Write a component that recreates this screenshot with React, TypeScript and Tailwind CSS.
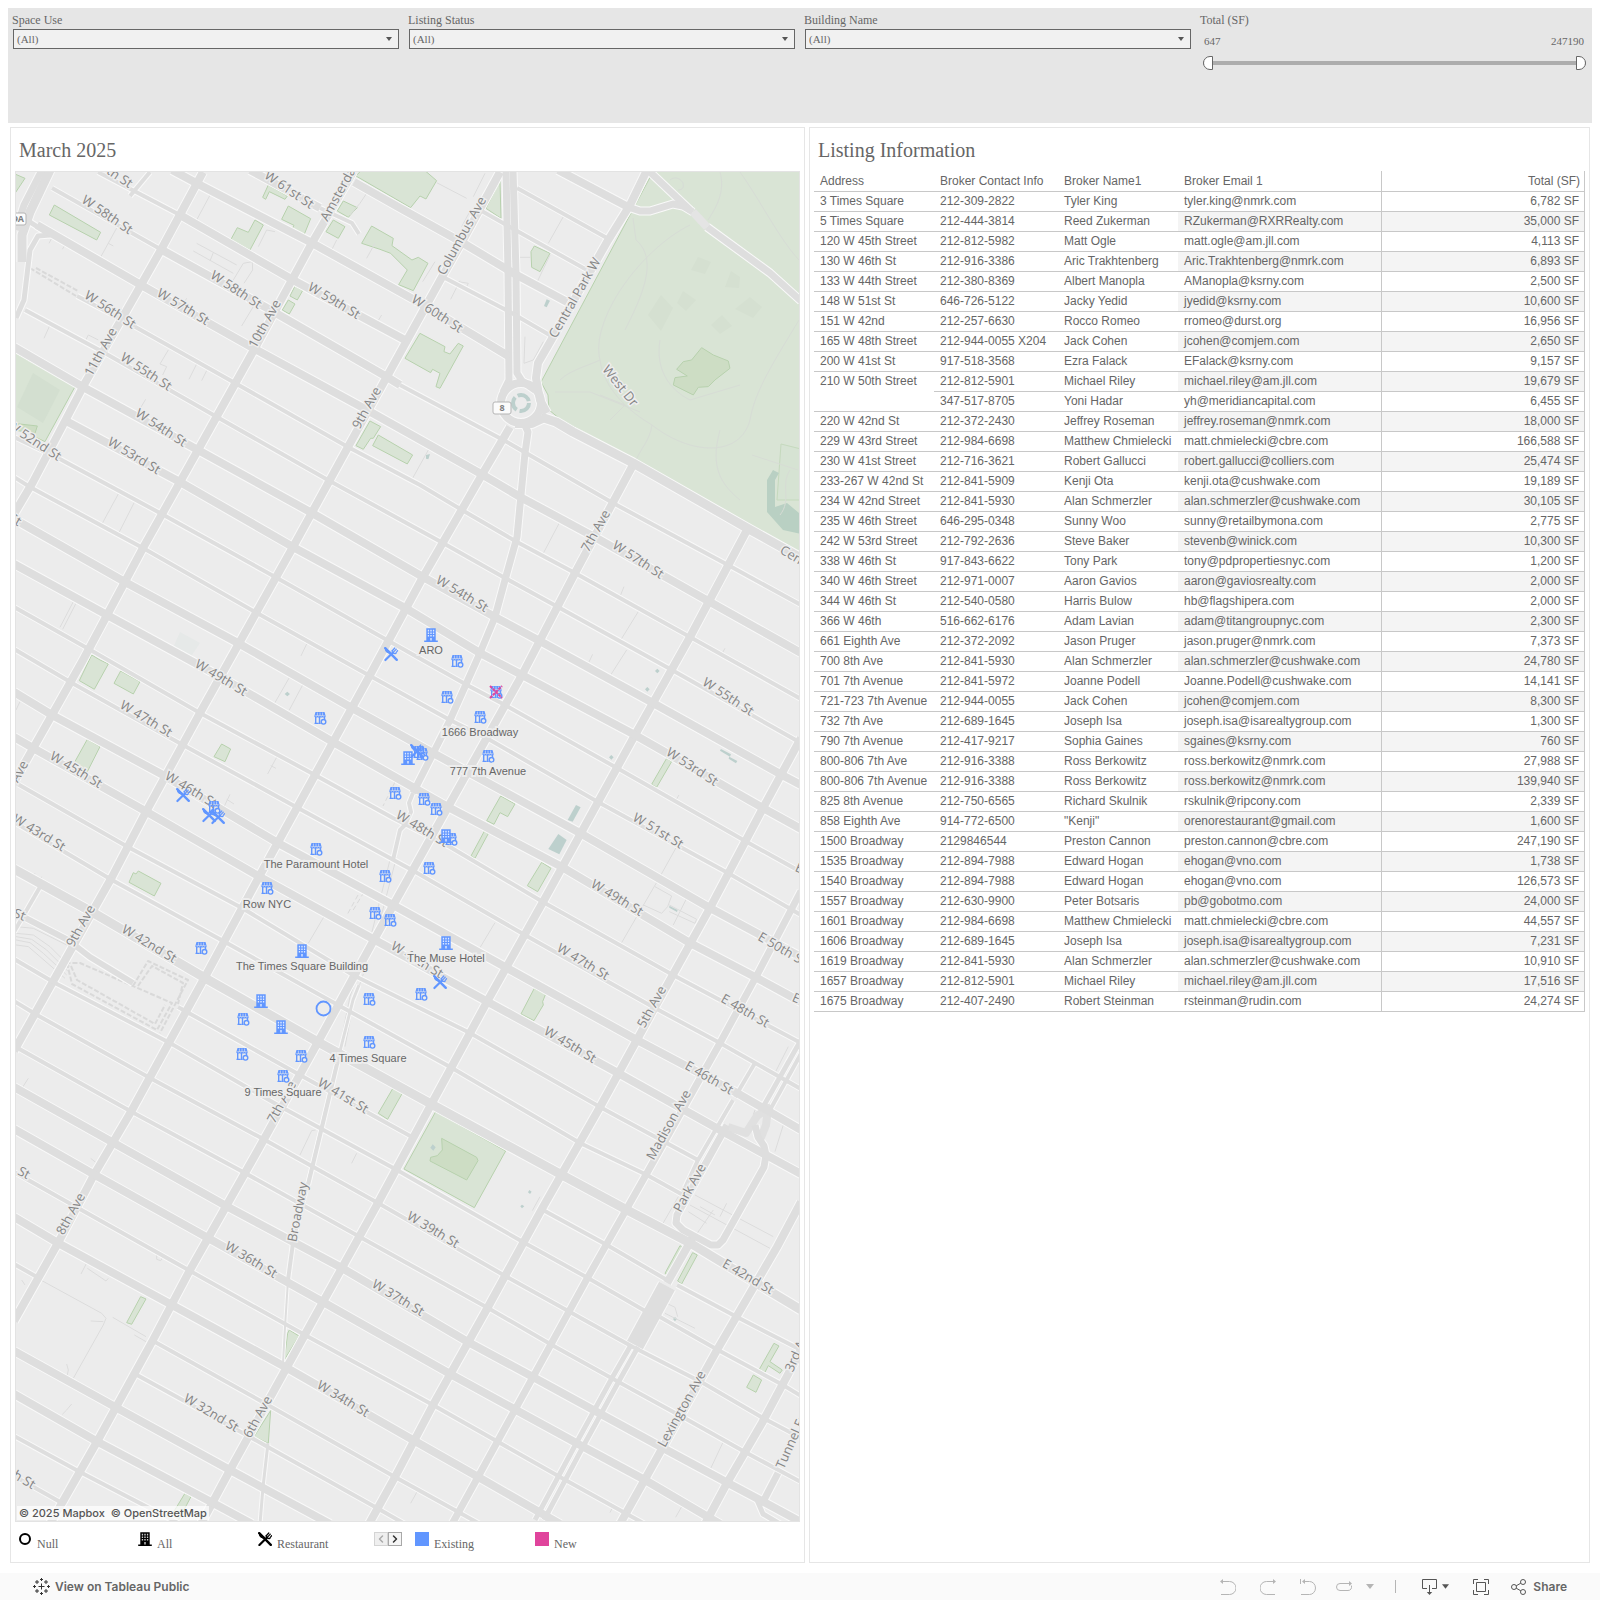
import { ChevronLeft, ChevronRight } from "lucide-react";

type Broker = [address: string, phone: string, name: string, email: string, total: string];

const LISTINGS: Broker[] = [
	["3 Times Square", "212-309-2822", "Tyler King", "tyler.king@nmrk.com", "6,782"],
	["5 Times Square", "212-444-3814", "Reed Zukerman", "RZukerman@RXRRealty.com", "35,000"],
	["120 W 45th Street", "212-812-5982", "Matt Ogle", "matt.ogle@am.jll.com", "4,113"],
	["130 W 46th St", "212-916-3386", "Aric Trakhtenberg", "Aric.Trakhtenberg@nmrk.com", "6,893"],
	["133 W 44th Street", "212-380-8369", "Albert Manopla", "AManopla@ksrny.com", "2,500"],
	["148 W 51st St", "646-726-5122", "Jacky Yedid", "jyedid@ksrny.com", "10,600"],
	["151 W 42nd", "212-257-6630", "Rocco Romeo", "rromeo@durst.org", "16,956"],
	["165 W 48th Street", "212-944-0055 X204", "Jack Cohen", "jcohen@comjem.com", "2,650"],
	["200 W 41st St", "917-518-3568", "Ezra Falack", "EFalack@ksrny.com", "9,157"],
	["210 W 50th Street", "212-812-5901", "Michael Riley", "michael.riley@am.jll.com", "19,679"],
	["210 W 50th Street", "347-517-8705", "Yoni Hadar", "yh@meridiancapital.com", "6,455"],
	["220 W 42nd St", "212-372-2430", "Jeffrey Roseman", "jeffrey.roseman@nmrk.com", "18,000"],
	["229 W 43rd Street", "212-984-6698", "Matthew Chmielecki", "matt.chmielecki@cbre.com", "166,588"],
	["230 W 41st Street", "212-716-3621", "Robert Gallucci", "robert.gallucci@colliers.com", "25,474"],
	["233-267 W 42nd St", "212-841-5909", "Kenji Ota", "kenji.ota@cushwake.com", "19,189"],
	["234 W 42nd Street", "212-841-5930", "Alan Schmerzler", "alan.schmerzler@cushwake.com", "30,105"],
	["235 W 46th Street", "646-295-0348", "Sunny Woo", "sunny@retailbymona.com", "2,775"],
	["242 W 53rd Street", "212-792-2636", "Steve Baker", "stevenb@winick.com", "10,300"],
	["338 W 46th St", "917-843-6622", "Tony Park", "tony@pdpropertiesnyc.com", "1,200"],
	["340 W 46th Street", "212-971-0007", "Aaron Gavios", "aaron@gaviosrealty.com", "2,000"],
	["344 W 46th St", "212-540-0580", "Harris Bulow", "hb@flagshipera.com", "2,000"],
	["366 W 46th", "516-662-6176", "Adam Lavian", "adam@titangroupnyc.com", "2,300"],
	["661 Eighth Ave", "212-372-2092", "Jason Pruger", "jason.pruger@nmrk.com", "7,373"],
	["700 8th Ave", "212-841-5930", "Alan Schmerzler", "alan.schmerzler@cushwake.com", "24,780"],
	["701 7th Avenue", "212-841-5972", "Joanne Podell", "Joanne.Podell@cushwake.com", "14,141"],
	["721-723 7th Avenue", "212-944-0055", "Jack Cohen", "jcohen@comjem.com", "8,300"],
	["732 7th Ave", "212-689-1645", "Joseph Isa", "joseph.isa@isarealtygroup.com", "1,300"],
	["790 7th Avenue", "212-417-9217", "Sophia Gaines", "sgaines@ksrny.com", "760"],
	["800-806 7th Ave", "212-916-3388", "Ross Berkowitz", "ross.berkowitz@nmrk.com", "27,988"],
	["800-806 7th Avenue", "212-916-3388", "Ross Berkowitz", "ross.berkowitz@nmrk.com", "139,940"],
	["825 8th Avenue", "212-750-6565", "Richard Skulnik", "rskulnik@ripcony.com", "2,339"],
	["858 Eighth Ave", "914-772-6500", "\"Kenji\"", "orenorestaurant@gmail.com", "1,600"],
	["1500 Broadway", "2129846544", "Preston Cannon", "preston.cannon@cbre.com", "247,190"],
	["1535 Broadway", "212-894-7988", "Edward Hogan", "ehogan@vno.com", "1,738"],
	["1540 Broadway", "212-894-7988", "Edward Hogan", "ehogan@vno.com", "126,573"],
	["1557 Broadway", "212-630-9900", "Peter Botsaris", "pb@gobotmo.com", "24,000"],
	["1601 Broadway", "212-984-6698", "Matthew Chmielecki", "matt.chmielecki@cbre.com", "44,557"],
	["1606 Broadway", "212-689-1645", "Joseph Isa", "joseph.isa@isarealtygroup.com", "7,231"],
	["1619 Broadway", "212-841-5930", "Alan Schmerzler", "alan.schmerzler@cushwake.com", "10,910"],
	["1657 Broadway", "212-812-5901", "Michael Riley", "michael.riley@am.jll.com", "17,516"],
	["1675 Broadway", "212-407-2490", "Robert Steinman", "rsteinman@rudin.com", "24,274"]
];

const FILTERS = ["Space Use", "Listing Status", "Building Name"];

// [width, points]
const ROADS: [number, string][] = [
	// avenues
	[8, "203,172 162,248 141,285 85,383 33,482 14,514"],
	[8, "353,172 312,243 255,348 198,450 143,548 83,660 52,715 14,782"],
	[8, "500,172 463,240 442,277 400,353 348,447 293,547 200,713 147,810 112,877 55,978 14,1051"],
	[8, "510,427 483,473 423,577 370,675 315,775 260,875 205,977 132,1110 95,1173 58,1243 14,1321"],
	[8, "633,465 575,573 522,675 448,807 375,938 318,1042 258,1150 190,1270 153,1340 98,1440 50,1524"],
	[8, "747,530 690,637 635,735 543,902 488,1000 432,1103 378,1203 323,1302 287,1367 230,1470 201,1524"],
	[8, "801,738 763,808 710,908 655,1007 600,1107 543,1207 488,1307 433,1405 395,1477 369,1524"],
	[7, "801,891 757,975 720,1043 647,1173 588,1277 533,1377 478,1477 452,1524"],
	[8, "801,1202 777,1247 717,1350 663,1447 620,1524"],
	[8, "801,1350 762,1423 727,1483 705,1524"],
	[7, "778,1473 764,1500"],
	[8, "693,1237 667,1283"],
	[18, "667,1286 635,1345"],
	[5, "631,1345 612,1378 578,1440 535,1520"],
	[5, "638,1347 619,1381 585,1443 544,1520"],
	[5, "801,1040 763,1107"],
	[4, "803,1050 770,1110"],
	[7, "727,1125 677,1215 676,1223 683,1230 711,1245 718,1245 723,1240 764,1167 766,1155 764,1146 758,1137 755,1125"],
	[4, "733,1100 698,1160 683,1192"],
	[4, "755,1063 735,1097"],
	// Broadway
	[7, "524,423 528,432 525,453 517,537 505,580 495,617 480,653 450,720 413,793"],
	[4, "413,793 409,803 411,812 405,825 400,830 393,860"],
	[3, "359,985 353,1000 337,1063 312,1167 293,1243"],
	[4, "338,1060 322,1127 308,1185"],
	[4, "293,1243 288,1280"],
	[2, "288,1280 285,1327 283,1363"],
	[3, "268,1443 263,1487 260,1524"],
	// Columbus circle and the park edge
	[7, "506,170 508,273 509,380 503,392"],
	[7, "513,170 516,273 517,373 522,381 535,390"],
	[8, "647,170 630,205 607,242 553,337 538,363 536,378 540,400 547,413"],
	[9, "541,417 556,422 573,432 633,463 747,528 801,558"],
	[8, "547,417 532,424 515,424"],
	[7, "650,172 690,210"],
	[7, "628,207 640,211 650,211 673,204 683,206 693,212"],
	[7, "707,227 770,273 801,301"],
	// west side highway
	[9, "50,170 30,212 22,235 22,262"],
	[7, "42,170 24,205 16,230"],
	[5, "30,222 50,235 38,236 30,250 24,300 16,318"],
	// cross streets, north to south
	[8, "558,170 630,208"],
	[4, "517,188 607,238"],
	[4, "480,210 510,227 587,270"],
	[8, "354,182 400,208 463,243 513,273 567,302"],
	[4, "443,277 510,312 553,337"],
	[8, "250,170 320,208"],
	[4, "320,208 352,223 359,234"],
	[8, "172,170 200,185 312,243 420,303 510,357"],
	[4, "98,172 180,215"],
	[8, "180,215 293,280 405,340"],
	[4, "52,188 162,250"],
	[8, "162,250 267,308 387,377 400,385"],
	[4, "130,196 140,184 150,172"],
	[4, "400,385 507,442 613,503 728,565 801,605"],
	[8, "37,225 141,285 253,348 367,410 483,475 522,498 600,540 710,602 801,653"],
	[4, "77,296 123,320 235,383 348,447 420,485 462,510 517,542 575,573 690,637 801,699"],
	[4, "25,310 103,352 217,417 328,480 443,543 505,578 558,607 672,670 801,743"],
	[8, "14,347 83,387 198,450 312,513 423,577 495,617 538,640 653,703 782,775 801,785"],
	[8, "68,422 180,482 293,547 407,609 480,653 522,675 635,735 763,808 801,829"],
	[4, "14,437 58,458 160,513 277,578 387,640 467,685 505,705 617,768 747,842 801,872"],
	[4, "14,477 30,487 143,548 257,613 372,677 450,720 490,740 598,802 728,873 801,915"],
	[8, "14,519 125,582 238,643 352,708 433,753 580,833 710,908 801,957"],
	[8, "14,564 107,615 217,675 333,742 448,807 562,867 690,943 757,978 801,1002"],
	[4, "14,607 87,648 200,713 315,775 393,818 450,847 543,902 673,975 801,1043"],
	[4, "14,649 72,683 183,745 298,808 412,870 525,935 653,1007 720,1043 801,1089"],
	[8, "14,692 52,715 163,775 278,843 393,905 507,968 637,1040 737,1093 801,1130"],
	[8, "14,737 33,748 147,812 260,877 375,940 488,1002 618,1073 720,1130 801,1174"],
	[4, "14,782 128,847 242,908 353,975 470,1033 600,1107 698,1160"],
	[4, "14,822 112,880 225,942 338,1005 452,1068 580,1143 647,1175 683,1195"],
	[9, "14,869 92,912 205,978 318,1042 433,1105 562,1175 627,1210 690,1243 801,1310"],
	[6, "14,912 68,940 90,957 133,983"],
	[4, "178,1007 300,1075 412,1137"],
	[4, "40,887 14,932"],
	[4, "543,1210 607,1245 667,1280"],
	[4, "677,1285 737,1317 801,1350"],
	[4, "14,959 55,983 170,1043 283,1108 397,1170 523,1242 588,1278 647,1312"],
	[4, "660,1317 718,1350 783,1385 801,1396"],
	[4, "14,1001 37,1015 150,1078 265,1140 378,1203 507,1277 570,1312 633,1347 703,1383 763,1418 801,1438"],
	[4, "14,1046 132,1112 245,1173 360,1237 488,1308 552,1345 615,1380 688,1420 745,1452 801,1482"],
	[8, "14,1087 112,1142 228,1207 342,1268 468,1342 533,1377 663,1448 728,1483 760,1500 801,1522"],
	[8, "14,1129 95,1175 208,1238 323,1302 452,1375 580,1445 645,1480 720,1524"],
	[4, "14,1172 78,1208 192,1272 305,1335 433,1405 560,1477 645,1524"],
	[8, "14,1217 58,1243 172,1305 287,1368 413,1440 480,1478 560,1524"],
	[4, "14,1264 37,1277"],
	[4, "155,1342 268,1405 395,1477 480,1524"],
	[4, "137,1375 250,1437 377,1508 405,1524"],
	[8, "14,1351 117,1408 230,1470 330,1524"],
	[8, "14,1394 98,1442 213,1503 252,1524"],
	[4, "14,1436 80,1472 180,1524"],
	[4, "14,1476 62,1503"],
	[5, "757,1500 763,1514 780,1524"]
];

// Each detail tile holds its origin on the map; its shapes are drawn at a third of their size.
const TILES = [
	{
		x: 0,
		y: 160,
		parks: [
			"1068,48 1085,30 1273,30 1310,62 1278,117 1260,108 1232,143",
			"163,135 302,217 290,240 148,165",
			"805,75 862,108 855,118 808,95 797,118 788,112",
			"865,138 932,176 910,230 875,210 882,196 845,178",
			"1030,123 1072,143 1060,155 1045,172 1012,153",
			"1000,180 1035,200 1015,235 978,215",
			"765,180 790,195 750,270 693,238 712,203 745,217",
			"1115,198 1180,235 1176,257 1236,300 1255,292 1284,310 1240,392 1196,374 1222,330 1172,280 1140,268 1085,250",
			"885,378 908,392 892,420 870,408",
			"865,420 885,432 868,462 847,450",
			"1260,520 1335,560 1332,575 1350,582 1375,550 1390,558 1320,685 1308,680 1320,640 1298,628 1292,638 1215,595",
			"40,576 225,680 135,845 40,800",
			"1110,783 1142,800 1120,835 1112,835 1090,868 1068,857",
			"1135,825 1238,885 1222,912 1118,857",
			"40,40 75,55 45,100",
			"275,1485 300,1500 325,1512 283,1588 238,1562"
		],
		fields: ["40,790 112,798 105,820 40,810"],
		water: [],
		alleys: [
			"355,195 300,295", "325,250 340,258", "155,235 147,250", "195,255 187,268", "633,100 590,180 585,178",
			"590,250 710,315", "580,273 700,340", "640,278 630,303", "700,360 730,310 757,305 758,330 732,370",
			"760,440 725,498", "560,415 548,435", "1145,465 1130,490", "255,545 265,525 295,540", "150,495 132,535",
			"590,612 567,658", "620,632 605,662", "505,570 480,612 500,620 488,645", "437,718 415,755",
			"355,1002 307,1090", "403,1027 357,1118", "220,1325 180,1402", "228,1330 188,1408", "922,1448 903,1488",
			"1100,100 1080,130 1050,165", "1010,240 995,270", "1125,250 1100,295", "775,260 800,210 825,215"
		]
	},
	{
		x: 400,
		y: 160,
		parks: [
			"300,62 303,175 258,145",
			"403,258 450,280 420,335 395,322 393,275"
		],
		fields: [
			"905,563 940,585 985,603 990,625 945,660 925,680 895,682 880,705 820,675 825,653 862,648 830,628 850,605 875,600"
		],
		water: [
			"440,418 450,422 440,442 432,438", "78,885 90,882 85,898 78,896"
		],
		alleys: [
			"110,68 200,115", "255,40 220,110", "185,200 212,150", "490,170 445,250", "360,292 392,292", "450,285 412,365",
			"105,305 68,365", "175,365 205,370 195,390", "180,362 152,418", "375,530 372,610 400,600 430,545",
			"85,870 35,960", "480,1085 430,1180", "672,1280 662,1305", "718,1350 655,1452", "975,1465 967,1480"
		]
	},
	{
		x: 0,
		y: 650,
		parks: [
			"362,63 420,95 400,132 342,100",
			"262,268 300,290 262,365 222,340",
			"665,282 692,297 675,335 642,320",
			"415,663 483,700 463,738 387,697 400,668 408,672",
			"1180,1313 1207,1330 1163,1408 1135,1390"
		],
		fields: [],
		water: ["862,125 870,132 862,139 854,132"],
		alleys: [
			"868,83 822,163", "908,105 868,180", "832,318 803,372", "812,347 828,355", "690,433 670,475", "680,448 702,462",
			"978,790 925,880", "105,670 95,690", "125,680 117,695", "85,1285 67,1313", "60,155 48,180",
			"48,830 100,835 150,860 200,885", "48,850 100,855 150,890 210,950", "48,860 95,868 140,900 205,965",
			"48,870 90,878 130,910 200,975", "48,885 85,890 120,920 195,985",
			"1170,630 1115,850 1050,1040 1020,1190", "1190,620 1125,870 1060,1060 1035,1190"
		]
	},
	{
		x: 400,
		y: 650,
		parks: [
			"302,438 345,462 323,500 300,488 282,523 260,512",
			"255,540 267,547 225,625 213,618",
			"425,637 453,655 413,725 382,707",
			"800,325 815,335 770,412 755,403",
			"403,1015 437,1032 428,1055 430,1065 402,1112 363,1092"
		],
		fields: [],
		water: [
			"475,552 500,570 478,613 445,597", "528,465 542,472 518,515 503,510", "963,297 993,313 990,320 960,302",
			"988,320 1012,333 1008,340 986,326", "772,56 779,63 772,70 765,63", "742,111 749,118 742,125 735,118",
			"634,315 641,322 634,329 627,322", "808,767 833,780 831,786 808,773"
		],
		alleys: [
			"578,13 565,40", "600,53 588,77", "680,0 632,75", "830,590 780,680 665,878", "765,710 815,738 803,770 785,790 730,765",
			"808,765 890,808 885,820 808,785", "860,745 820,825", "285,818 240,893", "837,435 828,450", "1165,1190 1127,1265"
		]
	},
	{
		x: 0,
		y: 1100,
		parks: [
			"422,590 438,597 395,673 380,668",
			"868,690 897,708 853,780 863,700",
			"812,932 805,1030 762,1010",
			"555,1180 573,1190 535,1262 505,1262"
		],
		fields: [],
		water: [],
		alleys: [
			"122,540 305,640 318,655 310,675 220,835", "272,663 310,665", "338,652 438,710", "403,705 438,725", "262,485 243,522",
			"262,505 318,543 325,535", "947,90 935,92 900,165", "1070,160 1055,190", "470,462 470,478 482,482 490,470",
			"215,912 200,930 187,943", "200,792 205,810 197,850", "272,175 287,187", "65,540 75,555"
		]
	},
	{
		x: 400,
		y: 1100,
		parks: [
			"107,35 317,153 223,323 12,207",
			"840,437 850,445 803,525 795,520",
			"878,458 892,465 845,552 833,543",
			"1122,730 1137,738 1110,785 1147,810 1140,820 1105,797 1095,817 1078,808",
			"1060,825 1085,840 1068,877 1040,862"
		],
		fields: ["125,115 230,172 234,182 200,240 90,183 92,172 112,167 127,150"],
		water: ["98,133 107,142 100,152 91,143", "388,270 395,275 390,282 384,277", "366,314 373,319 366,325 361,319", "825,651 831,657 825,664 819,657"],
		alleys: [
			"420,290 397,332", "885,285 1120,410", "870,315 1110,445", "865,335 920,370", "940,330 888,405", "980,310 960,350",
			"835,290 788,372", "800,610 825,622 833,650", "795,640 885,685", "970,1025 930,1110", "53,1172 32,1210",
			"848,1215 827,1252", "638,1222 630,1238", "1150,75 1125,155", "900,320 945,345"
		]
	}
];

const PARK_PATHS = [
	"M600 360 C590 320 640 250 690 225",
	"M600 360 C604 390 630 412 652 425 C690 455 740 458 750 420 C755 390 775 360 799 320",
	"M633 218 L636 240 C660 260 640 300 625 330",
	"M560 380 C570 370 590 365 600 360",
	"M555 392 L590 392 L640 412",
	"M652 425 C650 440 640 450 636 460",
	"M660 340 C655 370 670 390 690 400 L740 385",
	"M720 430 C712 460 715 480 740 500",
	"M720 172 C725 190 718 205 708 220",
	"M740 172 C760 200 780 240 799 260",
	"M670 180 C680 172 690 190 678 190",
	"M752 455 L798 470",
	"M790 470 C780 485 792 500 780 515",
	"M610 420 L625 405 L600 395"
];

// [text, x, y, angle, anchor]
const STREET_NAMES: [string, number, number, number, ("start" | "end")?][] = [
	["W 58th St", 107, 215, 34],
	["W 59th St", 131, 185, 34, "end"],
	["W 61st St", 289, 190, 34],
	["W 58th St", 236, 290, 33],
	["W 57th St", 183, 307, 31],
	["W 59th St", 334, 301, 31],
	["W 56th St", 110, 310, 33],
	["W 55th St", 146, 372, 33],
	["W 54th St", 161, 428, 33],
	["W 53rd St", 134, 456, 31],
	["W 52nd St", 34, 441, 33],
	["W 50th St", 20, 523, 31, "end"],
	["11th Ave", 101, 352, -61],
	["10th Ave", 265, 324, -61],
	["9th Ave", 367, 408, -61],
	["Amsterdam Ave", 324, 220, -61, "start"],
	["Columbus Ave", 462, 236, -61],
	["W 60th St", 437, 314, 33],
	["Central Park W", 575, 298, -60],
	["West Dr", 620, 386, 51],
	["7th Ave", 596, 531, -61],
	["W 57th St", 638, 560, 33],
	["W 54th St", 462, 594, 31],
	["Central Park S", 781, 549, 31, "start"],
	["W 49th St", 221, 678, 31],
	["W 47th St", 146, 719, 31],
	["W 45th St", 76, 770, 31],
	["W 46th St", 191, 790, 31],
	["W 43rd St", 39, 833, 31],
	["10th Ave", 25, 762, -61, "end"],
	["9th Ave", 81, 926, -61],
	["W 42nd St", 149, 944, 31],
	["W 41st St", 25, 917, 20, "end"],
	["7th Ave", 271, 1122, -61, "start"],
	["W 41st St", 343, 1096, 31],
	["W 55th St", 728, 697, 33],
	["W 53rd St", 692, 767, 33],
	["W 51st St", 658, 831, 31],
	["W 49th St", 617, 898, 31],
	["W 48th St", 422, 829, 31],
	["W 47th St", 583, 962, 31],
	["W 44th St", 417, 960, 31],
	["W 45th St", 570, 1045, 31],
	["5th Ave", 652, 1007, -61],
	["E 50th St", 759, 936, 30, "start"],
	["E 48th St", 745, 1011, 30],
	["E 49th St", 793, 997, 24, "start"],
	["E 51st St", 796, 867, 24, "start"],
	["E 46th St", 709, 1078, 30],
	["Madison Ave", 669, 1125, -61],
	["Park Ave", 690, 1188, -61],
	["W 39th St", 433, 1230, 31],
	["E 42nd St", 748, 1277, 30],
	["3rd Ave", 789, 1371, -66, "start"],
	["Lexington Ave", 682, 1409, -61],
	["Tunnel Exit", 780, 1468, -66, "start"],
	["W 36th St", 251, 1260, 31],
	["W 37th St", 398, 1298, 31],
	["W 34th St", 343, 1399, 31],
	["W 32nd St", 211, 1413, 31],
	["8th Ave", 71, 1214, -61],
	["6th Ave", 258, 1417, -61],
	["Broadway", 298, 1212, -79],
	["W 35th St", 29, 1176, 28, "end"],
	["W 28th St", 34, 1486, 31, "end"]
];

const STORES = [
	[457, 661], [447, 697], [480, 717], [488, 756], [320, 718], [419, 752], [422, 754], [395, 793], [424, 799],
	[436, 809], [214, 807], [451, 839], [429, 868], [316, 849], [385, 876], [267, 888], [375, 913], [390, 920],
	[201, 948], [243, 1019], [242, 1054], [301, 1056], [283, 1076], [369, 999], [421, 994], [369, 1042], [496, 692]
];
const TOWERS = [[431, 635], [408, 758], [446, 836], [302, 951], [446, 943], [261, 1001], [281, 1027]];
const FORKS = [[391, 654], [183, 795], [209, 815], [218, 817], [417, 751], [440, 982]];
const PLACES: [string, number, number][] = [
	["ARO", 431, 654],
	["1666 Broadway", 480, 736],
	["777 7th Avenue", 488, 775],
	["The Paramount Hotel", 316, 868],
	["Row NYC", 267, 908],
	["The Times Square Building", 302, 970],
	["The Muse Hotel", 446, 962],
	["4 Times Square", 368, 1062],
	["9 Times Square", 283, 1096]
];

function Store() {
	return (
		<g fill="none" stroke="currentColor" strokeWidth="1.4">
			<path d="M-4.500 -6h9l1 3.600h-11z" fill="currentColor" stroke="none" />
			<path d="M-2.600 -5.500v3.500M0 -5.500v3.500M2.600 -5.500v3.500" stroke="#ececec" strokeWidth=".6" />
			<path d="M-5 -2.500v1q1.200 1 2.500 0q1.200 1 2.500 0q1.200 1 2.500 0q1.200 1 2.500 0v-1" strokeWidth="1.200" />
			<path d="M-4.300 -1v6M-5.500 5.400h3.500M-.5 -1v6M-1.800 5.400h2.500M4.500 -1v2" />
			<circle cx="3.500" cy="3.800" r="2.300" fill="#ececec" />
		</g>
	);
}

function Tower() {
	return (
		<g fill="currentColor">
			<path d="M-4.700 -6.700h9.400v12.200h2.100v1.400h-13.600v-1.400h2.100z" />
			<path
				d="M-3.200 -5.200h1.300v1.600h-1.300zM-.7 -5.200h1.400v1.600h-1.400zM1.900 -5.200h1.300v1.600h-1.300zM-3.200 -2.600h1.300v1.600h-1.300zM-.7 -2.600h1.400v1.600h-1.400zM1.900 -2.600h1.300v1.600h-1.300zM-3.200 0h1.300v1.600h-1.300zM-.7 0h1.400v1.600h-1.400zM1.900 0h1.300v1.600h-1.300zM-.7 3h1.400v2.500h-1.400z"
				fill="#fff"
				opacity=".8"
			/>
		</g>
	);
}

function Fork() {
	return (
		<g fill="none" stroke="currentColor" strokeLinecap="round">
			<path d="M-5.800 -5.800L5.800 5.800" strokeWidth="2.400" />
			<path d="M-6 -5.800q.2 4.300 4 5l1.500 -.5z" fill="currentColor" strokeWidth="1" />
			<path d="M-5.600 6L2 -1.500" strokeWidth="2.200" />
			<path d="M1 -3.500q.5 3.500 4 3M1 -3L3.800 -6M2.500 -1.800L5.300 -4.800M4.500 -.5L6.600 -3.300" strokeWidth="1.200" />
		</g>
	);
}

function StreetMap() {
	return (
		<svg viewBox="16 172 783 1349" className="block h-auto w-full bg-[#ececec]" role="img" aria-label="Map of listings around Times Square">
			<g strokeLinejoin="round">
				<polygon points="655,168 541,382 548,395 549,410 560,419 801,553 801,168" fill="#d9e4d5" stroke="#b7d1ad" />
				<polygon points="781,444 801,449 801,500 777,500" fill="#d6e3d3" stroke="#c5d9bd" />
				<polygon points="767,480 773,470 779,473 775,480 775,507 787,503 799,513 801,534 783,530 767,512" fill="#b9d0c3" />
				<g fill="#d5e0d1">
					<polygon points="698,257 711,262 705,274 691,270" />
					<polygon points="731,271 740,277 739,288 725,287" />
					<polygon points="661,295 673,308 661,331 648,315" />
					<polygon points="683,291 696,300 686,311 677,303" />
					<polygon points="750,297 762,307 753,318 735,309" />
					<polygon points="722,315 732,326 720,334 711,325" />
				</g>
				<g fill="none" stroke="#d7dcd5">
					{PARK_PATHS.map(d => <path key={d} d={d} />)}
				</g>
				<polygon points="180,632 200,643 190,658 172,650" fill="#e6e9e8" />
				{TILES.map(tile => (
					<g key={`${tile.x}-${tile.y}`} transform={`translate(${tile.x} ${tile.y}) scale(.3333)`} strokeWidth="3">
						{tile.parks.map(p => <polygon key={p} points={p} fill="#d9e4d5" stroke="#b7d1ad" />)}
						{tile.fields.map(p => <polygon key={p} points={p} fill="#cdddc4" stroke="#b7d1ad" />)}
						{tile.water.map(p => <polygon key={p} points={p} fill="#bdd0cd" />)}
						{tile.alleys.map(p => <polyline key={p} points={p} fill="none" stroke="#dcdcdc" />)}
					</g>
				))}
				<polygon points="33,373 60,390 43,423 17,407" fill="#d3dfd0" />
				{/* bus terminal ramps */}
				<g fill="none" stroke="#d9d9d9" strokeWidth="2" strokeDasharray="5 2">
					<path d="M67 963L72 984L157 1030L172 1003L80 963zM71 966L77 980L155 1024L165 1005M133 986L148 961L188 980L160 1033M138 986L152 966L183 983L178 1004" />
					<path d="M30 268L76 296M36 268L78 291" />
				</g>
				<g fill="none" stroke="#d9d9d9" strokeDasharray="5 3">
					<path d="M358 895L347 915M364 892L352 912M395 782L383 806" />
					<path d="M755 1110L748 1130L742 1135M768 1112L760 1135M772 1110L765 1128" />
				</g>
			</g>
			<g fill="none" strokeLinejoin="round">
				<g stroke="#f9f9f9">
					{ROADS.map(([width, points]) => <polyline key={points} points={points} strokeWidth={width + 2} />)}
					<circle cx="521" cy="403" r="20" strokeWidth="10" />
				</g>
				<g stroke="#dedede">
					<path d="M728 1127L746 1133L757 1116L768 1108L766 1125L760 1140" stroke="#e0e0e0" strokeWidth="8" />
					{ROADS.map(([width, points]) => <polyline key={points} points={points} strokeWidth={width} />)}
					<circle cx="521" cy="403" r="20" strokeWidth="8" />
				</g>
				<path d="M693 212L707 227" stroke="#e4e4e4" strokeWidth="8" />
				<circle cx="521" cy="403" r="8" stroke="#bdd0cd" strokeWidth="4" strokeDasharray="14 3" />
			</g>
			<g fill="#fbfbfb" stroke="#b5b5b5">
				<rect x="493" y="402" width="18" height="12" rx="2" />
				<rect x="5" y="213" width="21" height="12" rx="2" />
			</g>
			<g fontSize="9" fill="#808080" className="font-['Open_Sans',sans-serif] font-bold">
				<text x="502" y="411" textAnchor="middle">8</text>
				<text x="24" y="222" textAnchor="end">9A</text>
			</g>
			<g className="font-['Open_Sans',sans-serif]" fontSize="13" fill="#858585" stroke="#ededed" strokeWidth="3" paintOrder="stroke">
				{STREET_NAMES.map(([name, x, y, angle, anchor = "middle"]) => (
					<text key={`${name}-${x}`} transform={`translate(${x} ${y}) rotate(${angle})`} dy="4" textAnchor={anchor}>
						{name}
					</text>
				))}
			</g>
			<g className="text-[#6196ff]">
				{STORES.map(([x, y]) => <g key={`${x}-${y}`} transform={`translate(${x} ${y})`}><Store /></g>)}
				{TOWERS.map(([x, y]) => <g key={`${x}-${y}`} transform={`translate(${x} ${y})`}><Tower /></g>)}
				{FORKS.map(([x, y]) => <g key={`${x}-${y}`} transform={`translate(${x} ${y})`}><Fork /></g>)}
				<circle cx="323.500" cy="1008.500" r="7" fill="none" stroke="currentColor" strokeWidth="1.800" />
			</g>
			<g transform="translate(496 692)" stroke="#e0449c" strokeWidth="2" strokeDasharray="3 1">
				<path d="M-6 -6L6 6M-6 6L6 -6" />
			</g>
			<g className="font-['Liberation_Sans',Arial,sans-serif]" fontSize="11" fill="#666" stroke="#ededed" strokeWidth="4" paintOrder="stroke" textAnchor="middle">
				{PLACES.map(([name, x, y]) => <text key={name} x={x} y={y}>{name}</text>)}
			</g>
		</svg>
	);
}

function FilterSelect({ label }: { label: string }) {
	return (
		<label className="block pt-1 text-xs leading-4">
			<span className="block px-1">{label}</span>
			<span className="relative mx-[5px] mt-px block">
				<select className="block h-5 w-full appearance-none border border-[#666] bg-[#f1f1f1] px-[3px] text-[11px] leading-4 text-[#666]">
					<option>(All)</option>
				</select>
				<svg viewBox="0 0 6 4" className="pointer-events-none absolute top-2 right-[7px] h-1 w-[6px] fill-[#555]">
					<path d="M0 0h6l-3 4z" />
				</svg>
			</span>
		</label>
	);
}

function RangeFilter() {
	const range = "pointer-events-none absolute inset-0 m-0 h-full w-full appearance-none bg-transparent [&::-webkit-slider-thumb]:pointer-events-auto [&::-webkit-slider-thumb]:h-[14px] [&::-webkit-slider-thumb]:w-[10px] [&::-webkit-slider-thumb]:appearance-none [&::-webkit-slider-thumb]:border [&::-webkit-slider-thumb]:border-solid [&::-webkit-slider-thumb]:border-[#666] [&::-webkit-slider-thumb]:bg-white";

	return (
		<fieldset className="pt-1">
			<legend className="float-left w-full px-1 text-xs leading-4">Total (SF)</legend>
			<div className="clear-both flex justify-between px-2 pt-[5px] text-[11px] leading-4">
				<span>647</span>
				<span>247190</span>
			</div>
			<div className="relative mr-[6px] ml-[7px] mt-[7px] flex h-[14px] items-center">
				<div className="h-1 w-full bg-[#adadad]" />
				<input
					type="range"
					min={647}
					max={247190}
					defaultValue={647}
					aria-label="Minimum total (SF)"
					className={`${range} [&::-webkit-slider-thumb]:rounded-l-full`}
				/>
				<input
					type="range"
					min={647}
					max={247190}
					defaultValue={247190}
					aria-label="Maximum total (SF)"
					className={`${range} [&::-webkit-slider-thumb]:rounded-r-full`}
				/>
			</div>
		</fieldset>
	);
}

function Legend() {
	return (
		<div className="flex py-[10px] pl-[7px] text-xs leading-4">
			<ul className="flex">
				<li className="flex w-[120px] gap-[5px]">
					<svg viewBox="-7 -7 14 14" className="size-[14px]">
						<circle r="5" fill="none" stroke="#000" strokeWidth="2" />
					</svg>
					<span className="pt-1">Null</span>
				</li>
				<li className="flex w-[120px] gap-[5px]">
					<svg viewBox="-7 -7 14 14" className="size-[14px] text-black"><Tower /></svg>
					<span className="pt-1">All</span>
				</li>
				<li className="flex w-[116px] gap-[5px]">
					<svg viewBox="-7 -7 14 14" className="size-[14px] text-black"><Fork /></svg>
					<span className="pt-1">Restaurant</span>
				</li>
			</ul>
			<div className="flex h-[14px]">
				<button type="button" aria-label="Previous" disabled className="flex h-[14px] w-[14px] items-center justify-center border border-[#d4d4d4] bg-[#efefef] text-[#aaa]">
					<ChevronLeft className="size-3 shrink-0" strokeWidth={3} />
				</button>
				<button type="button" aria-label="Next" className="flex h-[14px] w-[14px] items-center justify-center border border-[#a8a8a8] bg-[#f5f5f5] text-[#333]">
					<ChevronRight className="size-3 shrink-0" strokeWidth={3} />
				</button>
			</div>
			<ul className="flex pl-[13px]">
				<li className="flex w-[120px] gap-[5px]">
					<span className="size-[14px] bg-[#6196ff]" />
					<span className="pt-1">Existing</span>
				</li>
				<li className="flex gap-[5px]">
					<span className="size-[14px] bg-[#e0449c]" />
					<span className="pt-1">New</span>
				</li>
			</ul>
		</div>
	);
}

function ListingTable() {
	return (
		<div className="mx-1">
			<table className="w-full table-fixed border-separate border-spacing-0 border-r border-[#c8c8c8] text-left font-['Liberation_Sans',Arial,sans-serif] text-xs leading-[19px] whitespace-nowrap">
				<colgroup>
					<col className="w-[120px]" />
					<col className="w-[124px]" />
					<col className="w-[120px]" />
					<col className="w-[203px]" />
					<col />
				</colgroup>
				<thead>
					<tr className="leading-5">
						<th className="border-b border-[#c8c8c8] px-[6px] font-normal">Address</th>
						<th className="border-b border-[#c8c8c8] px-[6px] font-normal">Broker Contact Info</th>
						<th className="border-b border-[#c8c8c8] px-[6px] font-normal">Broker Name1</th>
						<th className="border-b border-[#c8c8c8] px-[6px] font-normal">Broker Email 1</th>
						<th className="border-b border-l border-[#c8c8c8] pr-1 text-right font-normal">Total (SF)</th>
					</tr>
				</thead>
				<tbody>
					{LISTINGS.map(([address, phone, name, email, total], index) => {
						const isRepeated = index > 0 && LISTINGS[index - 1][0] === address;
						const rows = LISTINGS.filter(listing => listing[0] === address).length;
						const shade = index % 2 === 1 ? "bg-[#f4f4f4]" : "bg-white";

						return (
							<tr key={`${address}-${phone}`}>
								{!isRepeated && (
									<td rowSpan={rows} className="border-b border-[#c8c8c8] px-[6px] align-top">{address}</td>
								)}
								<td className="border-b border-[#c8c8c8] px-[6px]">{phone}</td>
								<td className="border-b border-[#c8c8c8] px-[6px]">{name}</td>
								<td className={`border-b border-[#c8c8c8] px-[6px] ${shade}`}>{email}</td>
								<td className={`border-b border-l border-[#c8c8c8] pr-[5px] text-right ${shade}`}>{total} SF</td>
							</tr>
						);
					})}
				</tbody>
			</table>
		</div>
	);
}

function Footer() {
	return (
		<footer className="flex h-[27px] items-center justify-between bg-[#fafafa] pr-[33px] pl-[33px] font-['Inter',sans-serif] text-xs font-semibold text-[#666]">
			<a href="#tableau" className="flex items-center gap-[5px]">
				<svg viewBox="0 0 17 17" className="size-[17px] stroke-[#333]" fill="none">
					<path d="M8.500 5.500v6M5.500 8.500h6M8.500 0v3M7 1.500h3M8.500 14v3M7 15.500h3M1.500 7v3M0 8.500h3M15.500 7v3M14 8.500h3M4 2v4M2 4h4M13 2v4M11 4h4M4 11v4M2 13h4M13 11v4M11 13h4" />
				</svg>
				View on Tableau Public
			</a>
			<div className="flex items-center">
				<button type="button" aria-label="Undo" disabled className="mr-6">
					<svg viewBox="0 0 16 16" className="size-4" fill="none" stroke="#b5b5b5">
						<path d="M1 2.500h8.500a6.500 6.500 0 0 1 0 13H1" />
						<path d="M0 2.500l3-2.500v5z" fill="#b5b5b5" stroke="none" />
					</svg>
				</button>
				<button type="button" aria-label="Redo" disabled className="mr-6">
					<svg viewBox="0 0 16 16" className="size-4" fill="none" stroke="#b5b5b5">
						<path d="M15 2.500H6.500a6.500 6.500 0 0 0 0 13H15" />
						<path d="M16 2.500l-3-2.500v5z" fill="#b5b5b5" stroke="none" />
					</svg>
				</button>
				<button type="button" aria-label="Reset" disabled className="mr-5">
					<svg viewBox="0 0 16 16" className="size-4" fill="none" stroke="#b5b5b5">
						<path d="M.5 0v5M3 2.500h6.500a6 6.500 0 0 1 0 13H1" />
						<path d="M2 2.500l3-2.500v5z" fill="#b5b5b5" stroke="none" />
					</svg>
				</button>
				<button type="button" aria-label="Refresh" disabled className="mr-[14px]">
					<svg viewBox="0 0 16 16" className="size-4" fill="none" stroke="#b5b5b5">
						<path d="M14 4.500H4a3.500 3.500 0 0 0 0 7h8a3.500 3.500 0 0 0 3.300-5" />
						<path d="M16 4.500l-3-2.500v5z" fill="#b5b5b5" stroke="none" />
					</svg>
				</button>
				<svg viewBox="0 0 8 5" className="mr-[21px] h-[5px] w-2 fill-[#b5b5b5]"><path d="M0 0h8l-4 5z" /></svg>
				<span className="mr-[26px] h-[13px] w-px bg-[#b5b5b5]" />
				<button type="button" aria-label="Download" className="mr-6 flex items-center gap-1">
					<svg viewBox="0 0 16 16" className="size-4" fill="none" stroke="#555">
						<path d="M5 9.500H.5v-9h14v9H10M7.500 6v9" />
						<path d="M4.800 13h5.400l-2.700 3z" fill="#555" stroke="none" />
					</svg>
					<svg viewBox="0 0 8 5" className="h-[5px] w-[7px] fill-[#555]"><path d="M0 0h8l-4 5z" /></svg>
				</button>
				<button type="button" aria-label="Full screen" className="mr-[22px]">
					<svg viewBox="0 0 16 16" className="size-4" fill="none" stroke="#555">
						<path d="M3.500 3.500h9v9h-9zM.5 5V.5H5M11 .5h4.500V5M15.500 11v4.500H11M5 15.500H.5V11" />
					</svg>
				</button>
				<button type="button" className="flex items-center gap-[6px]">
					<svg viewBox="0 0 16 16" className="size-4" fill="none" stroke="#555">
						<circle cx="3" cy="8" r="2.500" />
						<circle cx="12" cy="3" r="2.500" />
						<circle cx="12" cy="13" r="2.500" />
						<path d="M5.200 6.800L9.800 4.200M5.200 9.200l4.600 2.600" />
					</svg>
					Share
				</button>
			</div>
		</footer>
	);
}

export default function App() {
	return (
		<div className="flex min-h-screen flex-col bg-white font-['Liberation_Serif','Times_New_Roman',serif] text-[#666]">
			<header className="mx-2 mt-2 grid min-h-[115px] grid-cols-4 bg-[#e6e6e6]">
				{FILTERS.map(label => <FilterSelect key={label} label={label} />)}
				<RangeFilter />
			</header>
			<main className="mx-[10px] mt-1 mb-[10px] grid flex-1 grid-cols-[795fr_781fr] gap-1">
				<section className="border border-[#e6e6e6]">
					<h1 className="px-2 pt-[10px] pb-[9px] text-xl leading-6">March 2025</h1>
					<div className="relative mx-1 border border-[#e3e3e3]">
						<StreetMap />
						<div className="absolute bottom-px left-px flex gap-[6px] bg-white/70 px-[2px] font-['Inter',sans-serif] text-[11px] leading-[14px] font-medium text-[#555]">
							<a href="#mapbox">© 2025 Mapbox</a>
							<a href="#osm">© OpenStreetMap</a>
						</div>
					</div>
					<Legend />
				</section>
				<section className="border border-[#e6e6e6]">
					<h2 className="px-2 pt-[10px] pb-[9px] text-xl leading-6">Listing Information</h2>
					<ListingTable />
				</section>
			</main>
			<Footer />
		</div>
	);
}
